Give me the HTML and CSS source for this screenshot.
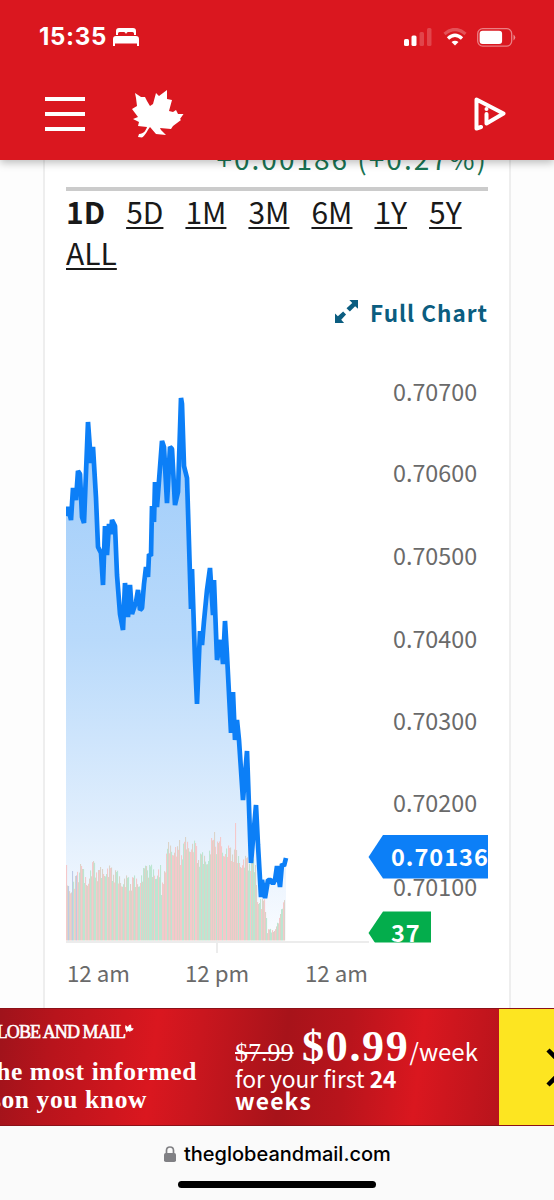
FILE: index.html
```html
<!DOCTYPE html>
<html lang="en">
<head>
  <meta charset="UTF-8" />
  <meta name="viewport" content="width=device-width, initial-scale=1.0" />
  <title>The Globe and Mail</title>
  <link rel="stylesheet" href="styles.css">
</head>
<body>
  <header class="top">
    <div class="status">
      <span class="time">15:35</span>
      <svg class="bed" width="26" height="18" viewBox="0 0 26 18" fill="#fff">
        <path d="M3 7V3Q3 0 6 0H20Q23 0 23 3V7H21V5.500Q21 4 19.500 4H15Q13.500 4 13.500 5.500H12.500Q12.500 4 11 4H6.500Q5 4 5 5.500V7Z"/>
        <path d="M0 18V11Q0 8 3 8H23Q26 8 26 11V18H24V15.500H2V18Z"/>
      </svg>
      <svg class="signal" width="28" height="18" viewBox="0 0 28 18" fill="#fff">
        <rect x="0" y="11" width="5" height="7" rx="1.5"/>
        <rect x="7.500" y="7.500" width="5" height="10.500" rx="1.5"/>
        <rect x="15.500" y="4" width="4.500" height="14" rx="1.5" opacity=".2"/>
        <rect x="23" y="0" width="4.500" height="18" rx="1.500" opacity=".2"/>
      </svg>
      <svg class="wifi" width="24" height="18" viewBox="0 0 24 18" fill="none" stroke="#fff" stroke-width="3.300">
        <path d="M1.500 6Q12-3 22.500 6" opacity=".25"/>
        <path d="M5 10.500Q12 4 19 10.500"/>
        <path d="M12 17.500L8.500 14Q12 11.500 15.500 14Z" fill="#fff" stroke="none"/>
      </svg>
      <svg class="battery" width="39" height="19" viewBox="0 0 39 19">
        <rect x=".7" y=".7" width="34" height="17.400" rx="5" fill="none" stroke="#fff" stroke-width="1.300" opacity=".45"/>
        <rect x="2.600" y="2.700" width="22.500" height="13.400" rx="3" fill="#fff"/>
        <path d="M36.500 6.500Q40 9.500 36.500 12.500Z" fill="#fff" opacity=".5"/>
      </svg>
    </div>
    <div class="bar">
      <div class="menu"><i></i><i></i><i></i></div>
      <svg class="leaf" width="52" height="49" viewBox="132 89 52 49" fill="#fff">
        <path d="M135 93L141 97L145 97L147 101L150 106L153 104L156 93L159 96L167 90L167 99L172 100L169 111L173 112L176 110L178 114L183.500 114L180 119L181 120L173 126L171 129L160 128L161 130L166 135L156 134L150 127C147 131 145 136 142 137.500L138 137L139 134C144 134 146 130 147 127L138 126L139 122L133 119L138 117L132 109L137 106L136 98Z"/>
      </svg>
      <svg class="adchoice" width="32" height="34" viewBox="0 0 32 34" fill="none" stroke="#fff" stroke-width="4" stroke-linejoin="round" stroke-linecap="round">
        <path d="M7 30L2.500 31.500V2.500L29.500 16.500L12.500 26.500V17"/>
        <circle cx="12.500" cy="12" r="2" fill="#fff" stroke="none"/>
      </svg>
    </div>
  </header>

  <main>
    <section class="card">
      <div class="change">+0.00186 (+0.27%)</div>
      <nav class="ranges">
        <b>1D</b><a>5D</a><a>1M</a><a>3M</a><a>6M</a><a>1Y</a><a>5Y</a><a>ALL</a>
      </nav>
      <div class="full">
        <svg width="23" height="23" viewBox="0 0 24 24" fill="#0b5d80">
          <path d="M15 0H24V9L21 6.500L15.500 12L12 8.500L18 3Z"/>
          <path d="M0 14L3 17L8.500 12L11.500 15L6.500 20.500L9.500 24H0Z"/>
        </svg>
        <span>Full Chart</span>
      </div>
      <svg class="chart" width="422" height="660" viewBox="66 340 422 660">
        <defs>
          <linearGradient id="fill" x1="0" y1="397" x2="0" y2="940" gradientUnits="userSpaceOnUse">
            <stop offset="0" stop-color="#9bcafa"/>
            <stop offset=".45" stop-color="#b9dafb"/>
            <stop offset=".8" stop-color="#e2effd"/>
            <stop offset="1" stop-color="#fafcff"/>
          </linearGradient>
        </defs>
        <path id="area" fill="url(#fill)"/>
        <g id="volume"></g>
        <path id="line" class="line"/>
        <path d="M66 942H369M217 942V953" class="axis"/>
        <g class="label">
          <text x="393" y="400.500">0.70700</text>
          <text x="393" y="482">0.70600</text>
          <text x="393" y="565">0.70500</text>
          <text x="393" y="648">0.70400</text>
          <text x="393" y="729.500">0.70300</text>
          <text x="393" y="812">0.70200</text>
          <text x="393" y="895.500">0.70100</text>
          <g class="hours">
            <text x="67" y="982">12 am</text>
            <text x="185" y="982">12 pm</text>
            <text x="305" y="982">12 am</text>
          </g>
        </g>
        <path d="M368.500 857L383 835H488V878.500H383Z" fill="#0c7ff7"/>
        <text x="391" y="865.500" class="tag">0.70136</text>
        <svg x="368" y="911" width="64" height="31.500" viewBox="368 911 64 31.500">
          <path d="M368.500 933L383 911.500H431V955H383Z" fill="#04ad4c"/>
          <text x="391" y="942" class="tag">37</text>
        </svg>
      </svg>
    </section>
  </main>

  <aside class="promo">
    <div class="pitch">
      <div class="brand"><span>THE GLOBE AND MAIL</span><svg width="9" height="9" viewBox="132 89 52 49" fill="#fff"><path d="M135 93L149 105L155 93L167 90L169 111L183 114L173 127L161 128L166 135L149 127L142 137L138 126L132 109Z"/></svg></div>
      <div class="slogan"><span>Be the most informed</span><span>person you know</span></div>
    </div>
    <div class="offer">
      <div class="price"><s>$7.99</s><strong>$0.99</strong><span>/week</span></div>
      <div class="term">for your first <b>24</b></div>
      <div class="term weeks"><b>weeks</b></div>
    </div>
    <div class="close">
      <svg width="39" height="39" viewBox="0 0 39 39"><path d="M2 2L37 37M37 2L2 37" stroke="#000" stroke-width="4.500"/></svg>
    </div>
  </aside>

  <footer>
    <div class="url">
      <svg width="12" height="16" viewBox="0 0 12 16"><rect y="7" width="12" height="9" rx="1.800" fill="#808084"/><path d="M2.500 8V4.500Q2.500 1 6 1T9.500 4.500V8" fill="none" stroke="#808084" stroke-width="1.700"/></svg>
      <span>theglobeandmail.com</span>
    </div>
    <div class="home"></div>
  </footer>

  <script>
    const price = [
      [66,516],[68,507],[71,520],[73,488],[76,500],[78,471],[80,474],[82,517],[84,523],[88,422],[91,463],
      [93,447],[96,498],[98,547],[101,553],[103,585],[105,526],[107,555],[109,524],[111,534],[112,520],
      [115,526],[117,575],[120,614],[123,630],[125,583],[128,617],[130,585],[132,614],[136,602],[138,590],
      [140,610],[142,608],[144,584],[146,567],[148,577],[149,554],[151,556],[152,506],[154,522],[155,482],
      [157,507],[162,441],[164,447],[167,503],[170,447],[172,449],[175,505],[178,492],[181,398],[182,404],
      [184,466],[187,478],[191,609],[192,569],[195,660],[197,704],[200,631],[202,645],[204,621],[207,590],
      [210,568],[213,615],[214,580],[217,660],[221,640],[223,664],[225,621],[227,655],[231,733],[233,692],
      [235,740],[237,720],[239,740],[243,800],[247,751],[251,863],[256,805],[258,845],[261,897],[262,880],
      [265,898],[268,880],[271,880],[273,884],[275,880],[277,866],[280,887],[282,864],[284,866],[286,858]
    ];
    // upper edge of the volume bars
    const tops = [
      [66,872],[68,889],[75,883],[80,870],[86,882],[93,867],[98,876],[104,870],[112,874],[120,880],[130,884],
      [140,880],[146,870],[155,873],[160,872],[161,900],[163,877],[168,848],[175,850],[180,858],[185,844],
      [195,848],[198,860],[208,858],[211,845],[225,851],[235,856],[241,862],[250,864],[255,868],[257,896],
      [262,906],[265,905],[267,931],[273,931],[279,920],[281,911],[284,898],[285,932]
    ];
    const spikes = { 72: 871, 80: 864, 93: 861, 146: 866, 168: 842, 179: 840, 211: 838, 214: 832, 220: 837, 235: 823 };

    const d = 'M' + price.map(p => p.join(' ')).join('L');
    document.getElementById('line').setAttribute('d', d);
    document.getElementById('area').setAttribute('d', d + 'V940H66Z');

    function topAt(x) {
      const i = Math.max(1, tops.findIndex(p => p[0] >= x));
      const [x0, y0] = tops[i - 1];
      const [x1, y1] = tops[i];
      return y0 + (y1 - y0) * (x - x0) / (x1 - x0);
    }

    const red = '#f5c8ca', green = '#bce6d2', tan = '#dbd3c8', blue = '#bdcae6';
    const mix = [red, tan, green, tan, tan, red, green, tan, green, tan, red];
    let bars = '';
    for (let x = 66, i = 0; x < 285; x += 1, i++) {
      const noise = (i * i * 7 + i * 5) % 17 - 7;
      const y = spikes[x] || Math.min(937, topAt(x) + noise * (x > 266 ? .3 : 1));
      let color = mix[i * 4 % 11];
      if (x > 139 && x < 160 && i % 2) color = green;
      if (x > 160 && x < 197 && i % 3 == 1) color = red;
      if (x > 197 && x < 210 || x > 250 && x < 256) color = i % 3 ? green : tan;
      if (x > 210 && x < 245 && i % 2) color = red;
      if (x < 77 && i % 4 == 2) color = blue;
      bars += `<rect x="${x}" y="${y}" width="1.1" height="${940.5 - y}" fill="${color}"/>`;
    }
    document.getElementById('volume').innerHTML = bars;
  </script>
</body>
</html>
```
FILE: styles.css
```css
* { box-sizing: border-box; }
body {
  margin: 0;
  width: 554px;
  height: 1200px;
  display: flex;
  flex-direction: column;
  overflow: hidden;
  background: #fdfdfd;
  font-family: "Noto Sans CJK SC", "Noto Sans", sans-serif;
}
svg { display: block; flex-shrink: 0; }

.top {
  position: relative;
  z-index: 2;
  height: 160px;
  flex-shrink: 0;
  background: #da171f;
  box-shadow: 0 3px 8px rgba(0,0,0,0.25);
}
.status {
  height: 74px;
  padding: 0 38px 0 39px;
  display: flex;
  align-items: center;
  color: #fff;
}
.time {
  width: 76px;
  font: bold 24px/30px Inter, sans-serif;
  letter-spacing: 0.7px;
}
.signal { margin: 0 0 0 265px; }
.wifi { margin-left: 11px; }
.battery { margin-left: 10px; }
.bar {
  height: 79px;
  padding: 0 48px 0 45px;
  display: flex;
  align-items: center;
}
.menu {
  width: 40px;
  display: grid;
  gap: 11px;
}
.menu i {
  height: 4px;
  background: #fff;
}
.leaf { margin-left: 47px; }
.adchoice { margin-left: auto; }

main {
  flex: 1;
  min-height: 0;
  overflow: hidden;
}
.card {
  width: 468px;
  height: 848px;
  margin-left: 43px;
  padding: 0 21px;
  display: flex;
  flex-direction: column;
  border: solid #eeeeee;
  border-width: 0 2px;
  background: #fff;
}
.change {
  height: 49px;
  margin-top: -18px;
  flex-shrink: 0;
  border-bottom: 4px solid #cbcbcb;
  text-align: right;
  color: #1a7453;
  font-size: 28px;
  line-height: 32px;
  letter-spacing: 2px;
  white-space: nowrap;
}
.ranges {
  height: 89px;
  flex-shrink: 0;
  display: flex;
  flex-wrap: wrap;
  align-content: flex-start;
  column-gap: 22px;
  color: #191919;
  font-size: 30px;
  line-height: 41px;
}
.ranges b { margin-right: -1px; }
.ranges a {
  text-decoration: underline;
  text-decoration-thickness: 2px;
  text-underline-offset: 3px;
}
.full {
  height: 60px;
  flex-shrink: 0;
  padding-top: 3px;
  display: flex;
  justify-content: flex-end;
  align-items: center;
  gap: 12px;
  color: #0b5d80;
  font-size: 22.5px;
  font-weight: bold;
  letter-spacing: 1px;
}
.full svg { margin-bottom: 1px; }
.line {
  fill: none;
  stroke: #0c7ff7;
  stroke-width: 4.7;
  stroke-linejoin: bevel;
}
.axis {
  fill: none;
  stroke: #ececec;
  stroke-width: 2;
}
.label {
  fill: #6a6a6a;
  font-size: 23.3px;
}
.hours { font-size: 22.3px; }
.tag {
  fill: #fff;
  font-size: 23.5px;
  font-weight: bold;
  letter-spacing: 1px;
}

.promo {
  height: 118px;
  flex-shrink: 0;
  display: flex;
  overflow: hidden;
  color: #fff;
  background: linear-gradient(97deg, #9f131b 0%, #b8141c 10%, #da171f 28%, #c9161e 36%, #a7131a 51%, #b8141c 62%, #da171f 75%, #b8141c 90%);
  border-top: 1px solid #8c1118;
  border-bottom: 1px solid #8c1118;
}
.pitch {
  width: 235px;
  flex-shrink: 0;
  display: flex;
  flex-direction: column;
  font-family: "Liberation Serif", serif;
  white-space: nowrap;
}
.brand {
  width: 134px;
  margin-top: 12px;
  display: flex;
  justify-content: flex-end;
  font-size: 18px;
  line-height: 22px;
  letter-spacing: -0.9px;
  -webkit-text-stroke: 0.6px #fff;
}
.brand svg { margin-top: 3px; }
.slogan {
  margin-top: 15px;
  font-size: 25.5px;
  font-weight: bold;
  line-height: 28px;
  letter-spacing: 0.6px;
}
.slogan span {
  display: flex;
  justify-content: flex-end;
  width: 197px;
}
.slogan span + span { width: 147px; }
.offer {
  width: 264px;
  flex-shrink: 0;
  padding-top: 15px;
  white-space: nowrap;
}
.price {
  height: 44px;
  display: flex;
  align-items: baseline;
  line-height: 46px;
}
.price s {
  width: 67px;
  font-family: "Liberation Serif", serif;
  font-size: 26px;
}
.price strong {
  font-family: "Liberation Serif", serif;
  font-size: 44px;
  letter-spacing: 1.7px;
}
.price span { font-size: 24px; }
.term {
  font-size: 22.8px;
  line-height: 22px;
}
.weeks { letter-spacing: 1.2px; }
.close {
  flex: 1;
  padding: 39px 0 0 47px;
  background: #fde521;
}

footer {
  height: 74px;
  flex-shrink: 0;
  background: #fafafa;
}
.url {
  height: 55px;
  padding-left: 164px;
  display: flex;
  align-items: center;
  gap: 8px;
  font: 500 20px/24px Inter, sans-serif;
}
.home {
  width: 198px;
  height: 7px;
  margin-left: 178px;
  border-radius: 4px;
  background: #000;
}
```
